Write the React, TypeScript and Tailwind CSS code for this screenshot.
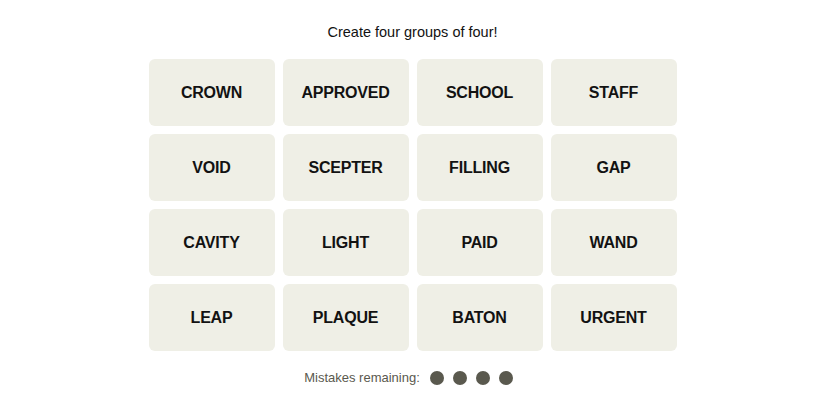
import React from 'react';

const words = [
  'CROWN', 'APPROVED', 'SCHOOL', 'STAFF',
  'VOID', 'SCEPTER', 'FILLING', 'GAP',
  'CAVITY', 'LIGHT', 'PAID', 'WAND',
  'LEAP', 'PLAQUE', 'BATON', 'URGENT',
];

export default function App() {
  return (
    <div className="w-[825px] h-[413px] bg-white flex flex-col items-center font-['Liberation_Sans',Arial,sans-serif] text-[#121212]">
      <p className="mt-[23px] h-[18px] leading-[18px] text-[14.5px]">Create four groups of four!</p>
      <div className="mt-[18px] grid grid-cols-[repeat(4,126px)] auto-rows-[67px] gap-[8px]">
        {words.map(w => (
          <div key={w} className="bg-[#efefe6] rounded-[6px] flex items-center justify-center text-[16px] font-bold tracking-[-0.2px]">
            {w}
          </div>
        ))}
      </div>
      <div className="mt-[17px] flex items-center text-[13px] text-[#5a594e] pr-[8px]">
        <span className="mr-[10px]">Mistakes remaining:</span>
        <div className="flex gap-[9px]">
          {[0, 1, 2, 3].map(i => (
            <span key={i} className="w-[14px] h-[14px] rounded-full bg-[#5a594e]" />
          ))}
        </div>
      </div>
    </div>
  );
}
